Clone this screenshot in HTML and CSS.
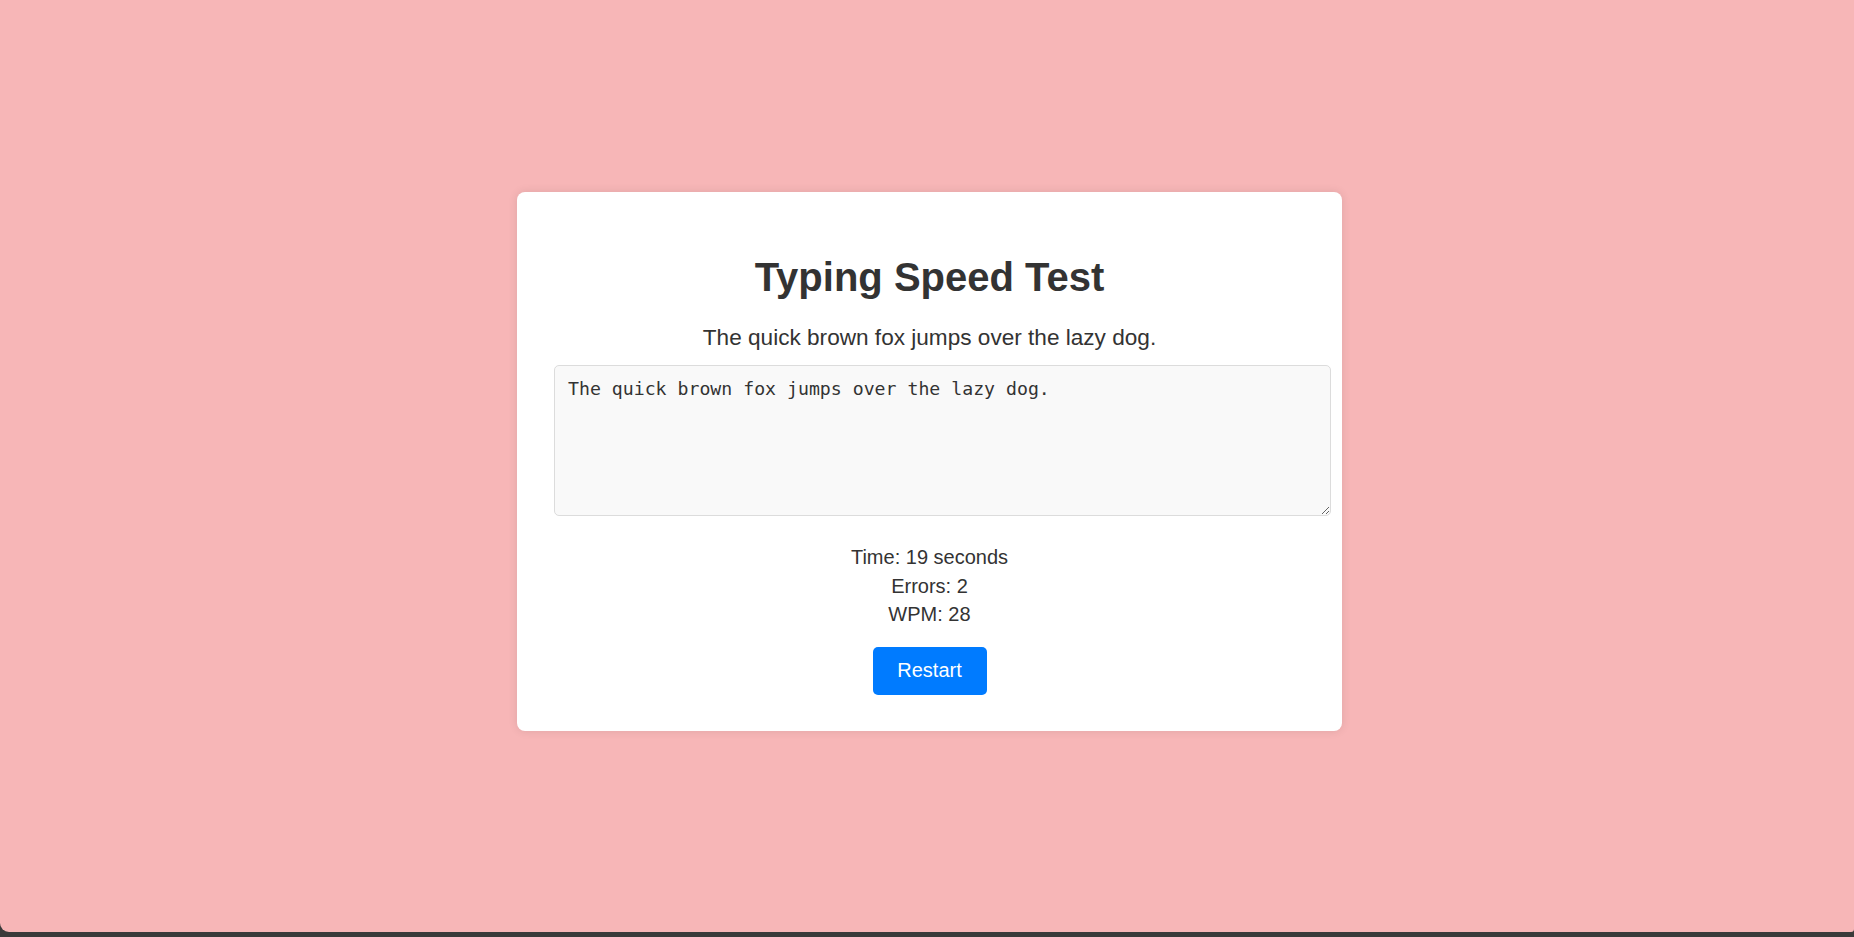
FILE: index.html
```html
<!DOCTYPE html>
<html lang="en">
<head>
<meta charset="utf-8">
<title>Typing Speed Test</title>
<link rel="stylesheet" href="styles.css">
</head>
<body>
<div class="page">
  <div class="card">
    <h1 class="title">Typing Speed Test</h1>
    <p class="sample">The quick brown fox jumps over the lazy dog.</p>
    <textarea class="input">The quick brown fox jumps over the lazy dog.</textarea>
    <div class="stats">
      <div class="stat">Time: 19 seconds</div>
      <div class="stat">Errors: 2</div>
      <div class="stat">WPM: 28</div>
    </div>
    <button class="restart">Restart</button>
  </div>
</div>
</body>
</html>
```

FILE: styles.css
```css
html, body {
  margin: 0;
  padding: 0;
  height: 100%;
}
body {
  background: #3a3a3a;
  font-family: "Liberation Sans", Arial, sans-serif;
  color: #333;
}
.page {
  height: 932px;
  background: #f7b6b7;
  border-radius: 0 0 3px 9px;
  display: flex;
  justify-content: center;
  align-items: flex-start;
  padding-top: 192px;
  padding-left: 5px;
  box-sizing: border-box;
}
.card {
  width: 825px;
  box-sizing: border-box;
  background: #fff;
  border-radius: 8px;
  box-shadow: 0 0 10px rgba(0, 0, 0, 0.1);
  padding: 63px 11px 36px 37px;
  display: flex;
  flex-direction: column;
  align-items: center;
}
.title {
  margin: 0;
  font-size: 40px;
  font-weight: bold;
  line-height: 45px;
  color: #333;
  text-align: center;
  margin-left: -26px;
}
.sample {
  margin: 25px 0 0;
  font-size: 22.6px;
  line-height: 25px;
  text-align: center;
  margin-left: -26px;
}
.input {
  margin-top: 15px;
  align-self: stretch;
  height: 151px;
  box-sizing: border-box;
  padding: 12px 13px;
  border: 1px solid #dcdcdc;
  border-radius: 5px;
  background: #f9f9f9;
  font-family: "DejaVu Sans Mono", "Liberation Mono", monospace;
  font-size: 18.2px;
  line-height: 21px;
  color: #333;
  resize: vertical;
}
.stats {
  margin-top: 27px;
  margin-left: -26px;
  display: flex;
  flex-direction: column;
  align-items: center;
  font-size: 20px;
  line-height: 28.5px;
}
.restart {
  margin-top: 18px;
  margin-left: -26px;
  width: 114px;
  height: 48px;
  border: none;
  border-radius: 5px;
  background: #007bff;
  color: #fff;
  font-family: "Liberation Sans", Arial, sans-serif;
  font-size: 20px;
  cursor: pointer;
}
```
